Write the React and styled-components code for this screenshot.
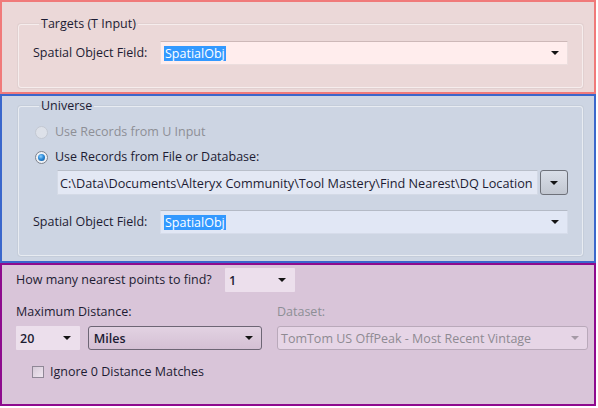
import styled, { createGlobalStyle } from "styled-components";

const Global = createGlobalStyle`
  body {
    margin: 0;
    background: #ffffff;
    font-family: "Open Sans", "Noto Sans", sans-serif;
    font-size: 12.5px;
    color: #1d1c33;
  }
`;

const tones = {
  red: { bg: "#ebd8d8", border: "#f07a7a" },
  blue: { bg: "#cdd5e3", border: "#3a67cc" },
  purple: { bg: "#d9c5d9", border: "#8e0b8e" },
};

const Window = styled.div`
  width: 596px;
  display: flex;
  flex-direction: column;
`;

const Panel = styled.section`
  background: ${(p) => tones[p.$tone].bg};
  border: 2px solid ${(p) => tones[p.$tone].border};
  padding: ${(p) => p.$pad || "0"};
`;

const Group = styled.fieldset`
  margin: ${(p) => p.$margin};
  padding: ${(p) => p.$pad};
  border: 1px solid rgba(255, 255, 255, 0.55);
  border-radius: 3px;
  box-shadow: 0 0 0 1px rgba(120, 110, 120, 0.08);
  min-width: 0;
`;

const Legend = styled.legend`
  margin-left: 6px;
  padding: 0 2px;
  line-height: 16px;
  font-size: 12.5px;
  color: #1d1c33;
`;

const FieldRow = styled.div`
  display: grid;
  grid-template-columns: 127px 1fr;
  align-items: center;
  margin-top: ${(p) => p.$top || "0"};
`;

const Label = styled.span`
  line-height: 16px;
  white-space: nowrap;
  color: ${(p) => (p.$disabled ? "#8d8f96" : "#1d1c33")};
`;

const Combo = styled.div`
  height: ${(p) => p.$h || "24px"};
  width: ${(p) => p.$w || "auto"};
  box-sizing: border-box;
  display: flex;
  align-items: center;
  justify-content: space-between;
  padding: 0 8px 0 3px;
  background: ${(p) => p.$bg};
  border: 1px solid ${(p) => p.$border || "transparent"};
  border-top-color: ${(p) => p.$top || p.$border || "transparent"};
  border-radius: ${(p) => p.$radius || "1px"};
  font-weight: ${(p) => p.$weight || 400};
  color: ${(p) => (p.$disabled ? "#8e8a92" : "#1d1c33")};
  white-space: nowrap;
  overflow: hidden;
`;

const Selected = styled.span`
  background: #3399ff;
  color: #ffffff;
  line-height: 15px;
  padding: 0 1px;
`;

const Arrow = styled.span`
  flex: none;
  width: 0;
  height: 0;
  border-left: 4px solid transparent;
  border-right: 4px solid transparent;
  border-top: 4px solid ${(p) => p.$color || "#141414"};
`;

const RadioRow = styled.div`
  display: flex;
  align-items: center;
  gap: 7px;
  height: 20px;
  margin: ${(p) => p.$margin || "0"};
  padding-left: 2px;
`;

const Radio = styled.span`
  width: 13px;
  height: 13px;
  box-sizing: border-box;
  border-radius: 50%;
  border: 1px solid ${(p) => (p.$disabled ? "#c3c8d2" : "#7d828c")};
  background: ${(p) => (p.$disabled ? "#dde1e9" : "#eef1f6")};
  display: flex;
  align-items: center;
  justify-content: center;
  &::after {
    content: "";
    display: ${(p) => (p.$checked ? "block" : "none")};
    width: 7px;
    height: 7px;
    border-radius: 50%;
    background: radial-gradient(circle at 40% 35%, #8fd0ff 0%, #2b8ad8 45%, #12508f 100%);
  }
`;

const PathRow = styled.div`
  display: flex;
  gap: 2px;
  margin: 3px 0 0 24px;
  height: 25px;
`;

const PathInput = styled.div`
  flex: 1;
  box-sizing: border-box;
  display: flex;
  align-items: center;
  padding: 0 2px;
  font-size: 12.7px;
  background: #e3e8f4;
  border: 1px solid #d4dae6;
  border-top-color: #b9bfca;
  white-space: nowrap;
  overflow: hidden;
`;

const PickButton = styled.div`
  width: 28px;
  box-sizing: border-box;
  display: flex;
  align-items: center;
  justify-content: center;
  border: 1px solid #6e717a;
  border-radius: 3px;
  background: linear-gradient(#d9dee8, #c2c7d1);
`;

const Line = styled.div`
  display: flex;
  align-items: center;
  gap: ${(p) => p.$gap || "0"};
  margin-top: ${(p) => p.$top || "0"};
`;

const Columns = styled.div`
  display: grid;
  grid-template-columns: 246px 311px;
  column-gap: 15px;
  margin-top: 12px;
`;

const Column = styled.div`
  display: flex;
  flex-direction: column;
  gap: 6px;
`;

const Check = styled.span`
  width: 12px;
  height: 12px;
  box-sizing: border-box;
  border: 1px solid #8f8796;
  background: linear-gradient(135deg, #d6cad8, #efe6f0);
  margin-right: 6px;
`;

export default function App() {
  return (
    <Window>
      <Global />
      <Panel $tone="red">
        <Group $margin="14px 11px 4px 16px" $pad="9px 14px 22px 14px">
          <Legend>Targets (T Input)</Legend>
          <FieldRow>
            <Label>Spatial Object Field:</Label>
            <Combo $bg="#ffeded" $border="#ecdede" $top="#cdb8b8">
              <Selected>SpatialObj</Selected>
              <Arrow />
            </Combo>
          </FieldRow>
        </Group>
      </Panel>

      <Panel $tone="blue">
        <Group $margin="2px 11px 5px 16px" $pad="8px 14px 21px 14px">
          <Legend>Universe</Legend>
          <RadioRow>
            <Radio $disabled />
            <Label $disabled>Use Records from U Input</Label>
          </RadioRow>
          <RadioRow $margin="5px 0 0 0">
            <Radio $checked />
            <Label>Use Records from File or Database:</Label>
          </RadioRow>
          <PathRow>
            <PathInput>
              C:\Data\Documents\Alteryx Community\Tool Mastery\Find Nearest\DQ Location
            </PathInput>
            <PickButton>
              <Arrow />
            </PickButton>
          </PathRow>
          <FieldRow $top="15px">
            <Label>Spatial Object Field:</Label>
            <Combo $bg="#e1e7f5" $border="#d6dcea" $top="#b4bac6">
              <Selected>SpatialObj</Selected>
              <Arrow />
            </Combo>
          </FieldRow>
        </Group>
      </Panel>

      <Panel $tone="purple" $pad="3px 6px 24px 14px">
        <Line>
          <Label style={{ width: 209 }}>How many nearest points to find?</Label>
          <Combo $w="70px" $bg="#ecdfec" $weight={600}>
            <span>1</span>
            <Arrow />
          </Combo>
        </Line>
        <Columns>
          <Column>
            <Label>Maximum Distance:</Label>
            <Line $gap="8px">
              <Combo $w="64px" $bg="#ecdfec" $weight={600}>
                <span>20</span>
                <Arrow />
              </Combo>
              <Combo
                $w="175px"
                $bg="linear-gradient(#e2d2e2, #d4c0d4)"
                $border="#6d6675"
                $radius="3px"
                $weight={600}
              >
                <span style={{ paddingLeft: 2 }}>Miles</span>
                <Arrow />
              </Combo>
            </Line>
          </Column>
          <Column>
            <Label $disabled>Dataset:</Label>
            <Combo $bg="#e6d5e6" $border="#b9a9ba" $radius="3px" $disabled>
              <span>TomTom US OffPeak - Most Recent Vintage</span>
              <Arrow $color="#a59aa6" />
            </Combo>
          </Column>
        </Columns>
        <Line $top="14px" style={{ paddingLeft: 16, height: 16 }}>
          <Check />
          <Label>Ignore 0 Distance Matches</Label>
        </Line>
      </Panel>
    </Window>
  );
}
